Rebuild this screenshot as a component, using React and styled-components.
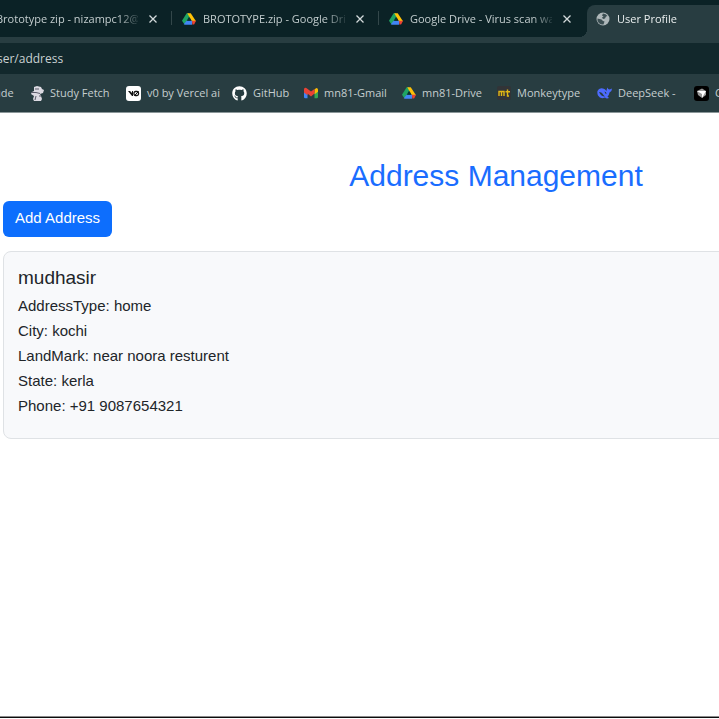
import React from "react";
import styled, { createGlobalStyle } from "styled-components";
import { FaGithub } from "react-icons/fa";

const GlobalStyle = createGlobalStyle`
  *, *::before, *::after { box-sizing: border-box; }
  html, body { margin: 0; background: #fff; }
  body { font-family: "Liberation Sans", Arial, sans-serif; color: #212529; }
`;

const Screen = styled.div`
  display: flex;
  flex-direction: column;
  min-height: 100vh;
  overflow: hidden;
`;

const Browser = styled.header`
  background: #283d41;
  border-bottom: 1px solid #8b9799;
  font-family: "Open Sans", "Noto Sans", sans-serif;
  color: #d3dadb;
`;

const TabStrip = styled.nav`
  display: flex;
  height: 37px;
  margin-left: -36px;
  background: #0b2226;
`;

const Tab = styled.div`
  position: relative;
  display: flex;
  flex: 0 0 207px;
  align-items: center;
  gap: 7px;
  height: 37px;
  padding-left: 11px;
  color: #c3cdce;

  & + &::before {
    content: "";
    position: absolute;
    left: 0;
    top: 11px;
    width: 1px;
    height: 14px;
    background: #33474a;
  }
`;

const ActiveTab = styled(Tab)`
  flex: 1 0 207px;
  align-self: flex-end;
  height: 32px;
  margin-left: 2px;
  padding: 0 0 4px 9px;
  border-radius: 8px 0 0 0;
  background: #283d41;
  color: #e9eeee;

  &&::before {
    left: -8px;
    top: 24px;
    width: 8px;
    height: 8px;
    background: radial-gradient(circle at 0 0, #0b2226 8px, #283d41 8px);
  }
`;

const TabLink = styled.a`
  flex: 0 0 142px;
  overflow: hidden;
  white-space: nowrap;
  font-size: 11px;
  line-height: 16px;
  color: inherit;
  text-decoration: none;
  mask-image: linear-gradient(to right, #000 122px, transparent 146px);
`;

const CloseButton = styled.button`
  display: grid;
  place-items: center;
  width: 16px;
  height: 16px;
  padding: 0;
  border: 0;
  background: transparent;
  color: #d3dadb;
`;

const AddressBar = styled.input`
  display: block;
  width: 100%;
  height: 31px;
  margin: 6px 0 0;
  padding: 0;
  border: 0;
  border-radius: 0;
  outline: 0;
  background: #12282c;
  color: #c9d1d2;
  font: 12px/18px "Open Sans", "Noto Sans", sans-serif;
  text-indent: -3px;
`;

const BookmarkBar = styled.nav`
  display: flex;
  align-items: center;
  height: 38px;
  margin-left: -6px;
`;

const Bookmark = styled.a`
  display: flex;
  flex: 0 0 ${(p) => p.$width}px;
  align-items: center;
  gap: 6px;
  white-space: nowrap;
  font-size: 11px;
  line-height: 16px;
  color: #c5cecf;
  text-decoration: none;

  svg { flex: none; }
`;

const Page = styled.main`
  flex: 1;
  width: 986px;
  margin-left: 3px;
  padding-top: 44px;
`;

const Title = styled.h1`
  margin: 0 0 7px;
  font-size: 30px;
  line-height: 37px;
  font-weight: 400;
  text-align: center;
  color: #1a6dff;
`;

const PrimaryButton = styled.button`
  display: block;
  height: 36px;
  padding: 0 12px 2px;
  border: 0;
  border-radius: 6px;
  background: #0d6efd;
  color: #fff;
  font: 15px/24px "Liberation Sans", Arial, sans-serif;
`;

const Card = styled.article`
  margin-top: 14px;
  padding: 14px 14px 20px;
  border: 1px solid #dfe2e5;
  border-radius: 8px;
  background: #f8f9fb;
`;

const CardName = styled.h2`
  margin: 0 0 4px;
  font-size: 19px;
  line-height: 23px;
  font-weight: 400;
`;

const Detail = styled.p`
  margin: 0;
  font-size: 15px;
  line-height: 25px;
`;

const Taskbar = styled.footer`
  height: 3px;
  border-top: 1px solid #8b8b8b;
  border-bottom: 1px solid #fff;
  background: #0c0c0c;
`;

const DriveIcon = () => (
  <svg width="14" height="14" viewBox="0 0 24 24" aria-hidden="true">
    <path fill="#1fa463" d="M8 2h4l2 7-7 9-3 3-4-6z" />
    <path fill="#ffc107" d="M9 2h6l9 14h-7z" />
    <path fill="#4285f4" d="M8 15h10l-1 7H5l-2-1z" />
    <path fill="#ea4335" d="M17 15h7l-3 6-3 1z" />
    <path fill="#0b3430" d="M12 8l4 7H8z" />
  </svg>
);

const GmailIcon = () => (
  <svg width="14" height="12" viewBox="0 0 24 20" aria-hidden="true">
    <path fill="#4285f4" d="M0 4l6 4v11H2q-2 0-2-2z" />
    <path fill="#34a853" d="M24 4l-6 4v11h4q2 0 2-2z" />
    <path fill="#fbbc04" d="M18 4l3-2.500q3 0 3 3V8l-6 4z" />
    <path fill="#ea4335" d="M0 4q0-4 4-2.500l8 6 6-4.500v8l-6 5-6-5v3L0 9z" />
  </svg>
);

const StudyFetchIcon = () => (
  <svg width="13" height="15" viewBox="0 0 13 15" aria-hidden="true">
    <path fill="#dcdae2" d="M3 1l3-1 4 1 1 2 2 1-1 3-3 1 1 2 1 3-1 2H3l-1-2 1-3-3-2 1-2 2-1z" />
    <path stroke="#5a5b69" fill="none" d="M4 3h4M0 6.500h5l4 1M5 10l-1 4M8 10h2" />
  </svg>
);

const VercelIcon = () => (
  <svg width="15" height="15" viewBox="0 0 15 15" aria-hidden="true">
    <rect width="15" height="15" rx="3" fill="#fff" />
    <path fill="#111" d="M2 5h2l2 2V5h1v5H6z" />
    <rect x="8" y="5.500" width="4.500" height="4" rx="1.500" fill="none" stroke="#111" strokeWidth="1.300" />
    <path stroke="#111" d="M8.500 9.500l4-4" />
  </svg>
);

const MonkeytypeIcon = () => (
  <svg width="14" height="14" viewBox="0 0 14 14" aria-hidden="true">
    <rect width="14" height="14" rx="2" fill="#323437" />
    <path fill="none" stroke="#e2b714" strokeWidth="1.400" d="M2 10V5.500h5V10M4.500 6v4M10.500 3.500V10H12M8.500 5.700H13" />
  </svg>
);

const DeepSeekIcon = () => (
  <svg width="15" height="12" viewBox="0 0 30 24" aria-hidden="true">
    <path fill="#4d6bfe" d="M1 8q3-7 11-5 4 0 7 5 0-4 2-7 1 4 4 4 3-1 5-2 0 6-5 8-1 6-4 8l3 3q-5 2-8-1-9 4-14-4-2-4-1-9z" />
    <path fill="#283d41" d="M4 10q6 0 9 6l3 3q-8 0-12-9zm11-1q4 0 4 5-3 0-4-5z" />
  </svg>
);

const CursorIcon = () => (
  <svg width="15" height="15" viewBox="0 0 15 15" aria-hidden="true">
    <rect width="15" height="15" rx="3" fill="#000" />
    <path fill="#999" d="M3 5l5-2.500L12 5v4l-4 3-4-3z" />
    <path fill="#fff" d="M3 5h9l-4 7V8z" />
  </svg>
);

const GlobeIcon = () => (
  <svg width="14" height="14" viewBox="0 0 28 28" aria-hidden="true">
    <circle cx="14" cy="14" r="13" fill="#aeb7b9" />
    <path fill="#3c4f53" d="M14 3q6 0 9 5l-3 1-2 4-4 1-2-3 3-2-3-2zM3 13l8 2 3 3 3 1-2 6q-9 1-12-8z" />
  </svg>
);

const CloseIcon = () => (
  <svg width="8" height="8" viewBox="0 0 8 8" aria-hidden="true">
    <path stroke="currentColor" strokeWidth="1.300" d="M.5.5l7 7M7.500.5l-7 7" />
  </svg>
);

const tabs = [
  "Brototype zip - nizampc12@gmail.com",
  "BROTOTYPE.zip - Google Drive",
  "Google Drive - Virus scan warning",
];

const bookmarks = [
  { label: "ude", width: 37 },
  { label: "Study Fetch", width: 95, icon: <StudyFetchIcon /> },
  { label: "v0 by Vercel ai", width: 106, icon: <VercelIcon /> },
  { label: "GitHub", width: 72, icon: <FaGithub size={15} color="#fff" /> },
  { label: "mn81-Gmail", width: 98, icon: <GmailIcon /> },
  { label: "mn81-Drive", width: 95, icon: <DriveIcon /> },
  { label: "Monkeytype", width: 100, icon: <MonkeytypeIcon /> },
  { label: "DeepSeek -", width: 97, icon: <DeepSeekIcon /> },
  { label: "Cursor", width: 80, icon: <CursorIcon /> },
];

const details = [
  ["AddressType", "home"],
  ["City", "kochi"],
  ["LandMark", "near noora resturent"],
  ["State", "kerla"],
  ["Phone", "+91 9087654321"],
];

export default function App() {
  return (
    <Screen>
      <GlobalStyle />
      <Browser>
        <TabStrip aria-label="Tabs">
          {tabs.map((title) => (
            <Tab key={title}>
              <DriveIcon />
              <TabLink href="#">{title}</TabLink>
              <CloseButton type="button" aria-label={`Close ${title}`}>
                <CloseIcon />
              </CloseButton>
            </Tab>
          ))}
          <ActiveTab>
            <GlobeIcon />
            <TabLink href="#" aria-current="page">User Profile</TabLink>
          </ActiveTab>
        </TabStrip>
        <AddressBar aria-label="Address bar" defaultValue="ser/address" />
        <BookmarkBar aria-label="Bookmarks">
          {bookmarks.map(({ label, width, icon }) => (
            <Bookmark key={label} href="#" $width={width}>
              {icon}
              {label}
            </Bookmark>
          ))}
        </BookmarkBar>
      </Browser>
      <Page>
        <Title>Address Management</Title>
        <PrimaryButton type="button">Add Address</PrimaryButton>
        <Card>
          <CardName>mudhasir</CardName>
          {details.map(([label, value]) => (
            <Detail key={label}>{label}: {value}</Detail>
          ))}
        </Card>
      </Page>
      <Taskbar />
    </Screen>
  );
}
